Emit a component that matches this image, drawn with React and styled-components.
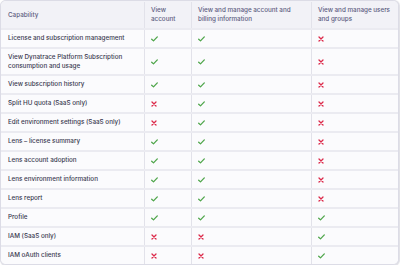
import React from "react";
import styled, { createGlobalStyle } from "styled-components";

const Global = createGlobalStyle`
  html, body { margin: 0; padding: 0; background: #ffffff; }
  body { font-family: Inter, "Noto Sans", sans-serif; }
`;

const Table = styled.div`
  width: 399px;
  height: 265px;
  box-sizing: border-box;
  border: 1px solid #dcdce6;
  border-radius: 6px;
  overflow: hidden;
  background: #fbfbfd;
  box-shadow: 0.5px 0.5px 1px rgba(40, 40, 80, 0.15);
  font-size: 6.3px;
  font-weight: 500;
  line-height: 9px;
`;

const Row = styled.div`
  display: grid;
  grid-template-columns: 143px 47px 120px 1fr;
  height: ${(p) => p.$h}px;
  box-sizing: border-box;
  padding-top: ${(p) => (p.$head ? "1px" : "0")};
  background: ${(p) => (p.$head ? "#f2f2f7" : "#fbfbfd")};
  border-top: ${(p) => (p.$head ? "none" : "2px solid #ebebf1")};
  color: ${(p) => (p.$head ? "#5c5c80" : "#3a3a50")};
`;

const Cell = styled.div`
  padding: 0 6px 0 ${(p) => (p.$first ? "7px" : "6px")};
  border-left: ${(p) => (p.$first ? "none" : "1px solid #e2e2ea")};
  display: flex;
  align-items: center;
  overflow: hidden;
`;

const Check = () => (
  <svg width="7" height="6" viewBox="0 0 7 6">
    <path d="M0.7 3.2 L2.5 4.9 L6.3 0.9" fill="none" stroke="#4fa64b" strokeWidth="1.3" strokeLinecap="round" strokeLinejoin="round" />
  </svg>
);

const Cross = () => (
  <svg width="6" height="6" viewBox="0 0 6 6">
    <path d="M1 1 L5 5 M5 1 L1 5" fill="none" stroke="#dc2a4a" strokeWidth="1.3" strokeLinecap="round" />
  </svg>
);

const rows = [
  ["License and subscription management", 1, 1, 0],
  ["View Dynatrace Platform Subscription consumption and usage", 1, 1, 0, 27],
  ["View subscription history", 1, 1, 0],
  ["Split HU quota (SaaS only)", 0, 1, 0],
  ["Edit environment settings (SaaS only)", 0, 1, 0],
  ["Lens \u2013 license summary", 1, 1, 0],
  ["Lens account adoption", 1, 1, 0],
  ["Lens environment information", 1, 1, 0],
  ["Lens report", 1, 1, 0],
  ["Profile", 1, 1, 1],
  ["IAM (SaaS only)", 0, 0, 1],
  ["IAM oAuth clients", 0, 0, 1],
];

export default function App() {
  return (
    <>
      <Global />
      <Table>
        <Row $head $h={27}>
          <Cell $first>Capability</Cell>
          <Cell>View account</Cell>
          <Cell>View and manage account and billing information</Cell>
          <Cell>View and manage users and groups</Cell>
        </Row>
        {rows.map(([name, a, b, c, h]) => (
          <Row key={name} $h={h || 19}>
            <Cell $first>{name}</Cell>
            <Cell>{a ? <Check /> : <Cross />}</Cell>
            <Cell>{b ? <Check /> : <Cross />}</Cell>
            <Cell>{c ? <Check /> : <Cross />}</Cell>
          </Row>
        ))}
      </Table>
    </>
  );
}
